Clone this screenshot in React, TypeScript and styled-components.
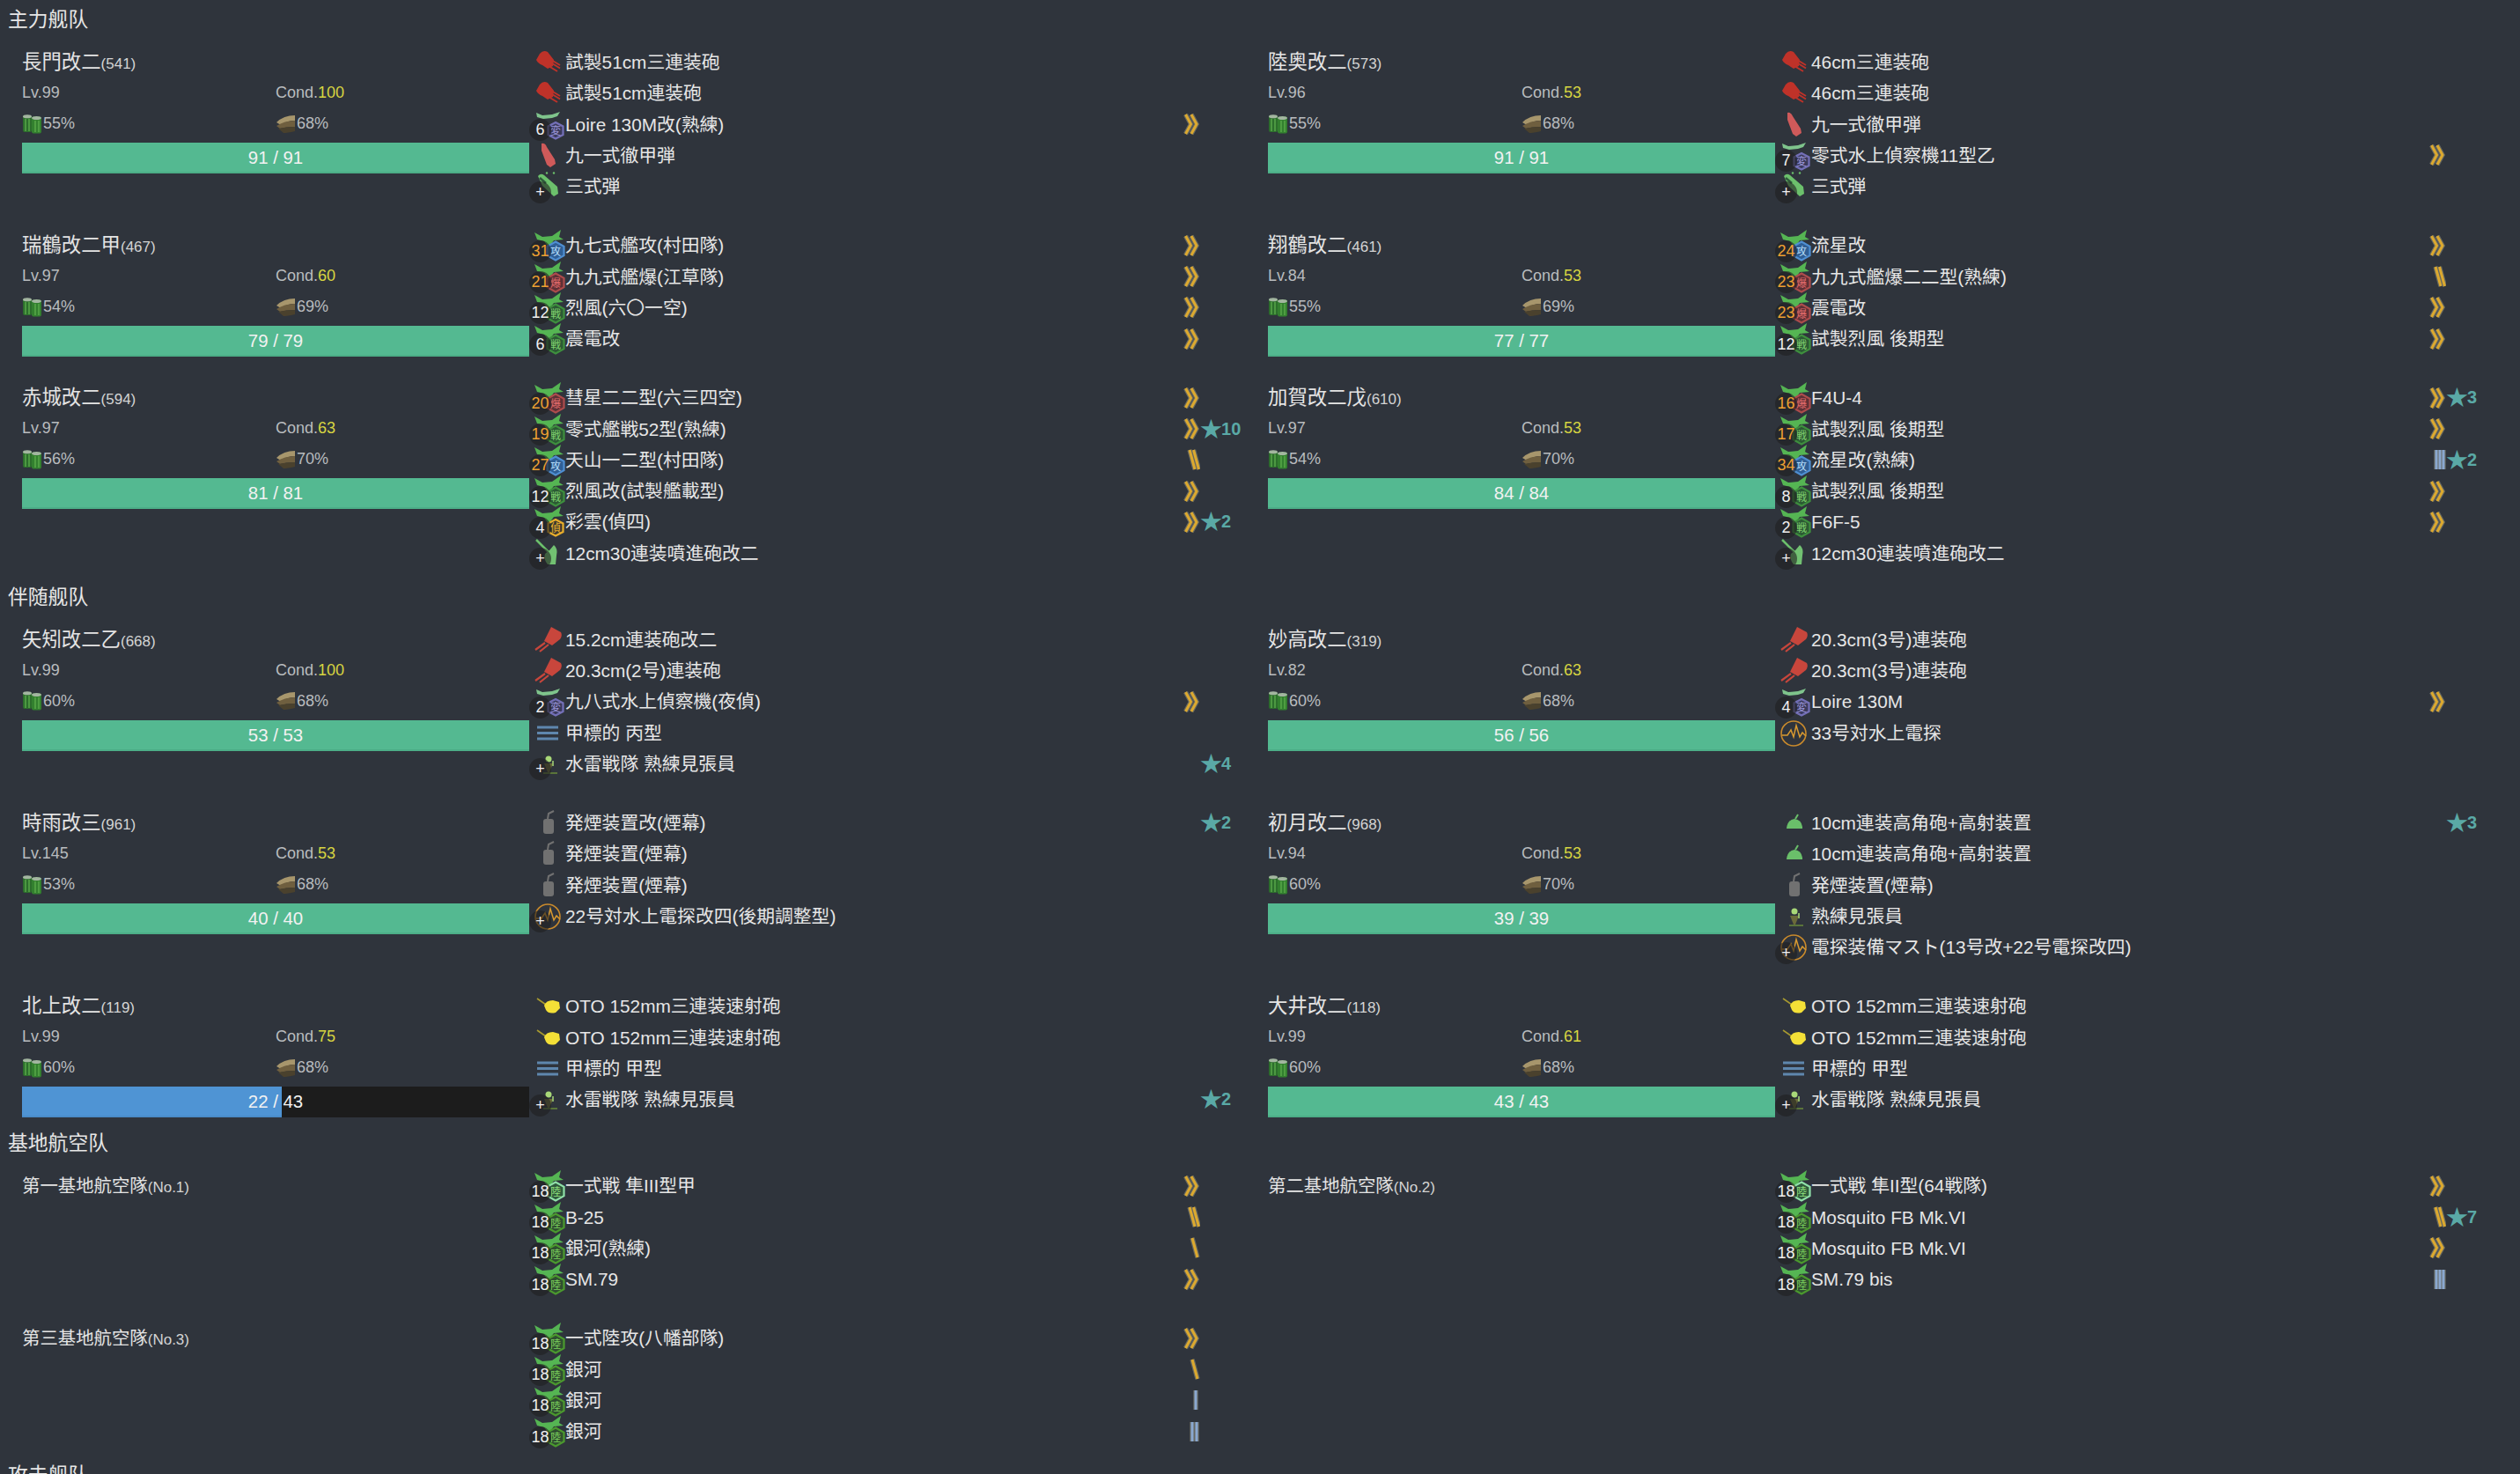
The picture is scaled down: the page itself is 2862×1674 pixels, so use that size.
import React from "react";
import styled, { createGlobalStyle } from "styled-components";

const Global = createGlobalStyle`
  html, body { margin: 0; padding: 0; background: #2f343c; height: 1674px; overflow: hidden; }
  body { font-family: "Liberation Sans", "Noto Sans CJK SC", "Noto Sans CJK JP", sans-serif; color: #e8e8e8; }
`;

const Page = styled.div`
  padding: 5px 0 0 9px;
  width: 2853px;
`;
const FleetTitle = styled.h2`
  margin: 0 0 12px;
  height: 35px;
  line-height: 35px;
  padding-bottom: 1px;
  font-size: 22.8px;
  font-weight: 400;
  color: #e6e6e6;
`;
const FleetBlock = styled.section`
  margin-bottom: 15px;
`;
const ShipGrid = styled.div`
  display: grid;
  grid-template-columns: repeat(2, 1415px);
  row-gap: 32px;
`;
const Ship = styled.article`
  display: flex;
  padding-left: 16px;
  align-items: flex-start;
`;
const Info = styled.div`
  width: 576px;
  flex: none;
  margin-bottom: -3px;
`;
const NameRow = styled.div`
  height: 35px;
  line-height: 36px;
  font-size: 22.4px;
  color: #e4e4e4;
  white-space: nowrap;
`;
const BaseName = styled(NameRow)`
  font-size: 20.4px;
`;
const SmallId = styled.span`
  font-size: 17px;
  color: #d4d4d4;
`;
const StatRow = styled.div`
  height: 35px;
  display: grid;
  grid-template-columns: 288px 288px;
  align-items: center;
  font-size: 18px;
  color: #b9bcbf;
`;
const Stat = styled.div`
  display: flex;
  align-items: center;
  gap: 1px;
`;
const CondValue = styled.span`
  color: #d7d541;
`;
const Bar = styled.div`
  margin-top: 4px;
  height: 35px;
  position: relative;
  background: #1c1c1c;
  font-size: 20.4px;
  color: #f2f2f2;
  line-height: 34px;
  text-align: center;
`;
const BarFill = styled.div<{ $full: boolean }>`
  position: absolute;
  left: 0;
  top: 0;
  bottom: 0;
  box-sizing: border-box;
  background: ${(p) => (p.$full ? "#54b991" : "#4f94d4")};
  border-bottom: 2px solid ${(p) => (p.$full ? "#4cae87" : "#4a8cc9")};
`;
const BarText = styled.span`
  position: relative;
`;
const GearList = styled.div`
  flex: 1;
  min-width: 0;
`;
const GearRow = styled.div`
  height: 35.25px;
  display: grid;
  grid-template-columns: 41px 701px 20px 1fr;
  align-items: center;
`;
const IconSlot = styled.div`
  position: relative;
  height: 35px;
  width: 41px;
`;
const GearSvg = styled.svg`
  position: absolute;
  left: 4px;
  top: 0;
  width: 36px;
  height: 36px;
  overflow: visible;
`;
const Count = styled.span<{ $ace: boolean }>`
  position: absolute;
  left: 0;
  top: 11.5px;
  width: 25px;
  height: 25px;
  border-radius: 50%;
  background: rgba(32, 32, 32, 0.6);
  color: ${(p) => (p.$ace ? "#eda032" : "#f0f0f0")};
  font-size: 18px;
  line-height: 25px;
  text-align: center;
`;
const GearName = styled.span`
  font-size: 20.8px;
  color: #e6e6e6;
  white-space: nowrap;
  line-height: 35px;
`;
const ProfSvg = styled.svg`
  width: 20px;
  height: 26px;
  display: block;
`;
const Stars = styled.span`
  color: #5aa9a6;
  font-size: 20px;
  font-weight: 700;
  white-space: nowrap;
  line-height: 35px;
  display: flex;
  align-items: center;
`;
const StarGlyph = styled.span`
  font-size: 25px;
  font-weight: 400;
  line-height: 25px;
  margin-right: -1px;
`;

type Kind =
  | "big" | "mid" | "ap" | "t3" | "rocket" | "oto" | "dome" | "target" | "look" | "smoke" | "radar"
  | "fighter" | "attack" | "bomber" | "recon" | "sea" | "land" | "landF";
type Prof = "chev" | "s1" | "s2" | "b1" | "b2" | "b3" | "";
interface Gear { k: Kind; t: string; n?: number | string; p?: Prof; s?: number; }
interface ShipData {
  name: string; id: number; lv?: number; cond?: number; fuel?: number; ammo?: number; hp?: [number, number]; gears: Gear[];
}

const g = (k: Kind, t: string, n?: number | string, p?: Prof, s?: number): Gear => ({ k, t, n, p, s });

const HEX: Record<string, { st: string; fill: string; tx: string; ch: string }> = {
  fighter: { st: "#3e8f3e", fill: "#2c5a34", tx: "#7fd06e", ch: "戦" },
  attack: { st: "#4f8fd2", fill: "#2f5f96", tx: "#b4dcf8", ch: "攻" },
  bomber: { st: "#ad4c4c", fill: "#5e3036", tx: "#e06a6a", ch: "爆" },
  recon: { st: "#e8ae2c", fill: "#3c3a30", tx: "#e8ae2c", ch: "偵" },
  sea: { st: "#7470b8", fill: "#3a3a5c", tx: "#9a96d8", ch: "変" },
  land: { st: "#4b9a2e", fill: "#2f4f30", tx: "#7ccf5c", ch: "陸" },
  landF: { st: "#8fe0a8", fill: "#2f5a3c", tx: "#8fe07c", ch: "陸" },
};

function PlaneIcon({ k }: { k: Kind }) {
  const h = HEX[k];
  const small = k === "sea" || k === "recon";
  return (
    <>
      {k === "sea" ? (
        <path d="M4 4 L11 7 L22 6 L31 3 L28 8 L22 10 L12 11 L5 9 Z" fill="#7fc48c" />
      ) : (
        <path d="M2 3 L11 8 L22 7 L32 0 L30 8 L35 11 L24 12 L18 20 L13 13 L5 11 Z" fill="#55b553" />
      )}
      <polygon
        points={small ? "26,15 34.5,19.5 34.5,29 26,33.5 17.5,29 17.5,19.5" : "26,13.5 35.5,18.8 35.5,29.2 26,34.5 16.5,29.2 16.5,18.8"}
        fill={h.fill}
        stroke={h.st}
        strokeWidth="2.2"
      />
      <text x="26" y="28.5" textAnchor="middle" fontSize="12" fill={h.tx} fontFamily="'Noto Sans CJK JP', sans-serif">
        {h.ch}
      </text>
    </>
  );
}

function GearIcon({ k }: { k: Kind }) {
  switch (k) {
    case "big":
      return (
        <g>
          <path d="M8 8 Q12 3 17 6 L24 15 L23 22 L17 25 L11 21 Q6 19 4 15 Z" fill="#bf3229" />
          <path d="M21 15 L31 21 M22 19 L31 24.5 M18 22 L28 28" stroke="#bf3229" strokeWidth="2" />
        </g>
      );
    case "mid":
      return (
        <g>
          <path d="M21 3 L32 9 Q34 13 31 17 L22 24 L13 19 Z" fill="#c8463c" />
          <path d="M14 21 L3 29 M18 23 L8 31" stroke="#c8463c" strokeWidth="2.2" />
        </g>
      );
    case "ap":
      return <path d="M10 4 Q14 3 16 8 L25 22 L26 27 L20 31 L16 28 L10 12 Z" fill="#cf5a5a" />;
    case "t3":
      return (
        <g>
          <path d="M6 6 Q9 2 13 5 L28 18 L29 26 L24 29 L11 17 Z" fill="#6cc06c" />
          <path d="M8 8 L15 14" stroke="#2f5a3c" strokeWidth="2.5" />
          <circle cx="16" cy="2.5" r="1.2" fill="#6cc06c" />
          <circle cx="24" cy="2.5" r="1.2" fill="#6cc06c" />
        </g>
      );
    case "rocket":
      return (
        <g>
          <path d="M4 2 L18 16" stroke="#6cc06c" strokeWidth="2.5" />
          <path d="M24 8 Q29 12 27 20 L26 30 L17 30 Q12 24 14 18 L19 14 Z" fill="#72c172" />
        </g>
      );
    case "oto":
      return (
        <g>
          <path d="M5 9 L15 16" stroke="#a89a30" strokeWidth="1.6" />
          <path d="M13 17 Q15 11 23 11 L30 13 L31 20 L26 25 Q18 27 15 22 Z" fill="#f4e037" />
        </g>
      );
    case "dome":
      return (
        <g>
          <path d="M9 24 Q10 14 18 13 Q26 14 27 22 L27 24 Z" fill="#6abf6a" />
          <path d="M19 13 L22 8" stroke="#6abf6a" strokeWidth="2" />
        </g>
      );
    case "target":
      return (
        <g stroke="#5f87ae" strokeWidth="3" fill="none">
          <path d="M5 11 H29" />
          <path d="M5 17.5 H29" />
          <path d="M5 24 H29" />
        </g>
      );
    case "look":
      return (
        <g>
          <circle cx="18" cy="12" r="3.5" fill="#a8d878" />
          <path d="M13 17 L23 17 L19 27 L17 27 Z" fill="#6a6a3a" />
          <path d="M12 28 H28" stroke="#6a8a3a" strokeWidth="1.5" />
          <path d="M23 14 L23 20" stroke="#a8d878" strokeWidth="1.5" />
        </g>
      );
    case "smoke":
      return (
        <g>
          <rect x="12" y="13" width="12" height="17" rx="3" fill="#717171" />
          <path d="M17 13 L18 7 L24 4" stroke="#717171" strokeWidth="2" fill="none" />
        </g>
      );
    case "radar":
      return (
        <g fill="none">
          <circle cx="17" cy="18" r="14" stroke="#c98a2c" strokeWidth="1.6" />
          <path d="M4 20 L10 20 L14 14 L17 22 L20 9 L24 22 L27 17 L31 21" stroke="#d99a30" strokeWidth="1.5" />
        </g>
      );
    default:
      return <PlaneIcon k={k} />;
  }
}

function ProfIcon({ p }: { p: Prof }) {
  if (!p) return <span />;
  const gold = "#dca92f";
  const blue = "#8aa8d0";
  const paths: Record<string, [string, string]> = {
    chev: ["M3.5 2 L9.5 13 L3.5 24 M10 2 L16 13 L10 24", gold],
    s1: ["M11 2 L17 24", gold],
    s2: ["M8 2 L14 24 M12.5 2 L18.5 24", gold],
    b1: ["M15 2 L15 24", blue],
    b2: ["M11 2 L11 24 M16 2 L16 24", blue],
    b3: ["M9 2 L9 24 M13 2 L13 24 M17 2 L17 24", blue],
  };
  const [d, c] = paths[p];
  return (
    <ProfSvg viewBox="0 0 20 26">
      <path d={d} stroke="#8b8a7a" strokeOpacity="0.6" strokeWidth="5.4" fill="none" />
      <path d={d} stroke={c} strokeWidth="3" fill="none" />
    </ProfSvg>
  );
}

function FuelIcon() {
  return (
    <svg width="23" height="22" viewBox="0 0 23 22">
      <rect x="1" y="1" width="10" height="19" rx="2" fill="#2c6e2c" />
      <rect x="11" y="2.5" width="11" height="19" rx="2" fill="#33802f" />
      <ellipse cx="6" cy="2.2" rx="5" ry="2" fill="#a3b6a0" />
      <ellipse cx="16.5" cy="4" rx="5.5" ry="2" fill="#a3b6a0" />
      <path d="M4 5 V19 M8 5 V19 M15 7 V20 M19 7 V20" stroke="#5aab4a" strokeWidth="1.4" />
    </svg>
  );
}

function AmmoIcon() {
  return (
    <svg width="23" height="20" viewBox="0 0 23 20">
      <path d="M1 8 Q9 0 22 0 L22 6 Q13 6 6 11 Z" fill="#a7966c" />
      <path d="M1 12 Q10 6 22 6 L22 13 Q12 13 5 15 Z" fill="#6f5f3f" />
      <path d="M3 15 Q12 13 22 13 L22 18 Q13 20 9 20 Z" fill="#4a412d" />
    </svg>
  );
}

function GearLine({ gear, base }: { gear: Gear; base?: boolean }) {
  const num = typeof gear.n === "number" ? gear.n : 0;
  return (
    <GearRow>
      <IconSlot>
        <GearSvg viewBox="0 0 36 36">
          <GearIcon k={gear.k} />
        </GearSvg>
        {gear.n !== undefined && <Count $ace={!base && num >= 13}>{gear.n}</Count>}
      </IconSlot>
      <GearName>{gear.t}</GearName>
      <ProfIcon p={gear.p ?? ""} />
      {gear.s ? (
        <Stars>
          <StarGlyph>★</StarGlyph>
          {gear.s}
        </Stars>
      ) : (
        <span />
      )}
    </GearRow>
  );
}

function ShipCard({ ship }: { ship: ShipData }) {
  const { hp } = ship;
  return (
    <Ship>
      <Info>
        <NameRow>
          {ship.name}
          <SmallId>({ship.id})</SmallId>
        </NameRow>
        <StatRow>
          <Stat>Lv.{ship.lv}</Stat>
          <Stat>
            <span>
              Cond.<CondValue>{ship.cond}</CondValue>
            </span>
          </Stat>
        </StatRow>
        <StatRow>
          <Stat>
            <FuelIcon />
            {ship.fuel}%
          </Stat>
          <Stat>
            <AmmoIcon />
            {ship.ammo}%
          </Stat>
        </StatRow>
        {hp && (
          <Bar>
            <BarFill $full={hp[0] === hp[1]} style={{ width: `${(hp[0] / hp[1]) * 100}%` }} />
            <BarText>
              {hp[0]} / {hp[1]}
            </BarText>
          </Bar>
        )}
      </Info>
      <GearList>
        {ship.gears.map((x, i) => (
          <GearLine key={i} gear={x} />
        ))}
      </GearList>
    </Ship>
  );
}

function BaseCard({ name, no, gears }: { name: string; no: number; gears: Gear[] }) {
  return (
    <Ship>
      <Info>
        <BaseName>
          {name}
          <SmallId>(No.{no})</SmallId>
        </BaseName>
      </Info>
      <GearList>
        {gears.map((x, i) => (
          <GearLine key={i} gear={x} base />
        ))}
      </GearList>
    </Ship>
  );
}

const main: ShipData[] = [
  { name: "長門改二", id: 541, lv: 99, cond: 100, fuel: 55, ammo: 68, hp: [91, 91], gears: [
    g("big", "試製51cm三連装砲"), g("big", "試製51cm連装砲"), g("sea", "Loire 130M改(熟練)", 6, "chev"),
    g("ap", "九一式徹甲弾"), g("t3", "三式弾", "+") ] },
  { name: "陸奥改二", id: 573, lv: 96, cond: 53, fuel: 55, ammo: 68, hp: [91, 91], gears: [
    g("big", "46cm三連装砲"), g("big", "46cm三連装砲"), g("ap", "九一式徹甲弾"),
    g("sea", "零式水上偵察機11型乙", 7, "chev"), g("t3", "三式弾", "+") ] },
  { name: "瑞鶴改二甲", id: 467, lv: 97, cond: 60, fuel: 54, ammo: 69, hp: [79, 79], gears: [
    g("attack", "九七式艦攻(村田隊)", 31, "chev"), g("bomber", "九九式艦爆(江草隊)", 21, "chev"),
    g("fighter", "烈風(六〇一空)", 12, "chev"), g("fighter", "震電改", 6, "chev") ] },
  { name: "翔鶴改二", id: 461, lv: 84, cond: 53, fuel: 55, ammo: 69, hp: [77, 77], gears: [
    g("attack", "流星改", 24, "chev"), g("bomber", "九九式艦爆二二型(熟練)", 23, "s2"),
    g("bomber", "震電改", 23, "chev"), g("fighter", "試製烈風 後期型", 12, "chev") ] },
  { name: "赤城改二", id: 594, lv: 97, cond: 63, fuel: 56, ammo: 70, hp: [81, 81], gears: [
    g("bomber", "彗星二二型(六三四空)", 20, "chev"), g("fighter", "零式艦戦52型(熟練)", 19, "chev", 10),
    g("attack", "天山一二型(村田隊)", 27, "s2"), g("fighter", "烈風改(試製艦載型)", 12, "chev"),
    g("recon", "彩雲(偵四)", 4, "chev", 2), g("rocket", "12cm30連装噴進砲改二", "+") ] },
  { name: "加賀改二戊", id: 610, lv: 97, cond: 53, fuel: 54, ammo: 70, hp: [84, 84], gears: [
    g("bomber", "F4U-4", 16, "chev", 3), g("fighter", "試製烈風 後期型", 17, "chev"),
    g("attack", "流星改(熟練)", 34, "b3", 2), g("fighter", "試製烈風 後期型", 8, "chev"),
    g("fighter", "F6F-5", 2, "chev"), g("rocket", "12cm30連装噴進砲改二", "+") ] },
];

const escort: ShipData[] = [
  { name: "矢矧改二乙", id: 668, lv: 99, cond: 100, fuel: 60, ammo: 68, hp: [53, 53], gears: [
    g("mid", "15.2cm連装砲改二"), g("mid", "20.3cm(2号)連装砲"), g("sea", "九八式水上偵察機(夜偵)", 2, "chev"),
    g("target", "甲標的 丙型"), g("look", "水雷戦隊 熟練見張員", "+", "", 4) ] },
  { name: "妙高改二", id: 319, lv: 82, cond: 63, fuel: 60, ammo: 68, hp: [56, 56], gears: [
    g("mid", "20.3cm(3号)連装砲"), g("mid", "20.3cm(3号)連装砲"), g("sea", "Loire 130M", 4, "chev"),
    g("radar", "33号対水上電探") ] },
  { name: "時雨改三", id: 961, lv: 145, cond: 53, fuel: 53, ammo: 68, hp: [40, 40], gears: [
    g("smoke", "発煙装置改(煙幕)", undefined, "", 2), g("smoke", "発煙装置(煙幕)"), g("smoke", "発煙装置(煙幕)"),
    g("radar", "22号対水上電探改四(後期調整型)", "+") ] },
  { name: "初月改二", id: 968, lv: 94, cond: 53, fuel: 60, ammo: 70, hp: [39, 39], gears: [
    g("dome", "10cm連装高角砲+高射装置", undefined, "", 3), g("dome", "10cm連装高角砲+高射装置"),
    g("smoke", "発煙装置(煙幕)"), g("look", "熟練見張員"), g("radar", "電探装備マスト(13号改+22号電探改四)", "+") ] },
  { name: "北上改二", id: 119, lv: 99, cond: 75, fuel: 60, ammo: 68, hp: [22, 43], gears: [
    g("oto", "OTO 152mm三連装速射砲"), g("oto", "OTO 152mm三連装速射砲"), g("target", "甲標的 甲型"),
    g("look", "水雷戦隊 熟練見張員", "+", "", 2) ] },
  { name: "大井改二", id: 118, lv: 99, cond: 61, fuel: 60, ammo: 68, hp: [43, 43], gears: [
    g("oto", "OTO 152mm三連装速射砲"), g("oto", "OTO 152mm三連装速射砲"), g("target", "甲標的 甲型"),
    g("look", "水雷戦隊 熟練見張員", "+") ] },
];

const bases = [
  { name: "第一基地航空隊", no: 1, gears: [
    g("landF", "一式戦 隼III型甲", 18, "chev"), g("land", "B-25", 18, "s2"), g("land", "銀河(熟練)", 18, "s1"), g("land", "SM.79", 18, "chev") ] },
  { name: "第二基地航空隊", no: 2, gears: [
    g("landF", "一式戦 隼II型(64戦隊)", 18, "chev"), g("land", "Mosquito FB Mk.VI", 18, "s2", 7),
    g("land", "Mosquito FB Mk.VI", 18, "chev"), g("land", "SM.79 bis", 18, "b3") ] },
  { name: "第三基地航空隊", no: 3, gears: [
    g("land", "一式陸攻(八幡部隊)", 18, "chev"), g("land", "銀河", 18, "s1"), g("land", "銀河", 18, "b1"), g("land", "銀河", 18, "b2") ] },
];

export default function App() {
  return (
    <Page>
      <Global />
      <FleetBlock>
        <FleetTitle>主力舰队</FleetTitle>
        <ShipGrid>{main.map((s) => <ShipCard key={s.id} ship={s} />)}</ShipGrid>
      </FleetBlock>
      <FleetBlock>
        <FleetTitle>伴随舰队</FleetTitle>
        <ShipGrid>{escort.map((s) => <ShipCard key={s.id} ship={s} />)}</ShipGrid>
      </FleetBlock>
      <FleetBlock>
        <FleetTitle>基地航空队</FleetTitle>
        <ShipGrid>{bases.map((b) => <BaseCard key={b.no} {...b} />)}</ShipGrid>
      </FleetBlock>
      <FleetTitle>攻击舰队</FleetTitle>
    </Page>
  );
}
